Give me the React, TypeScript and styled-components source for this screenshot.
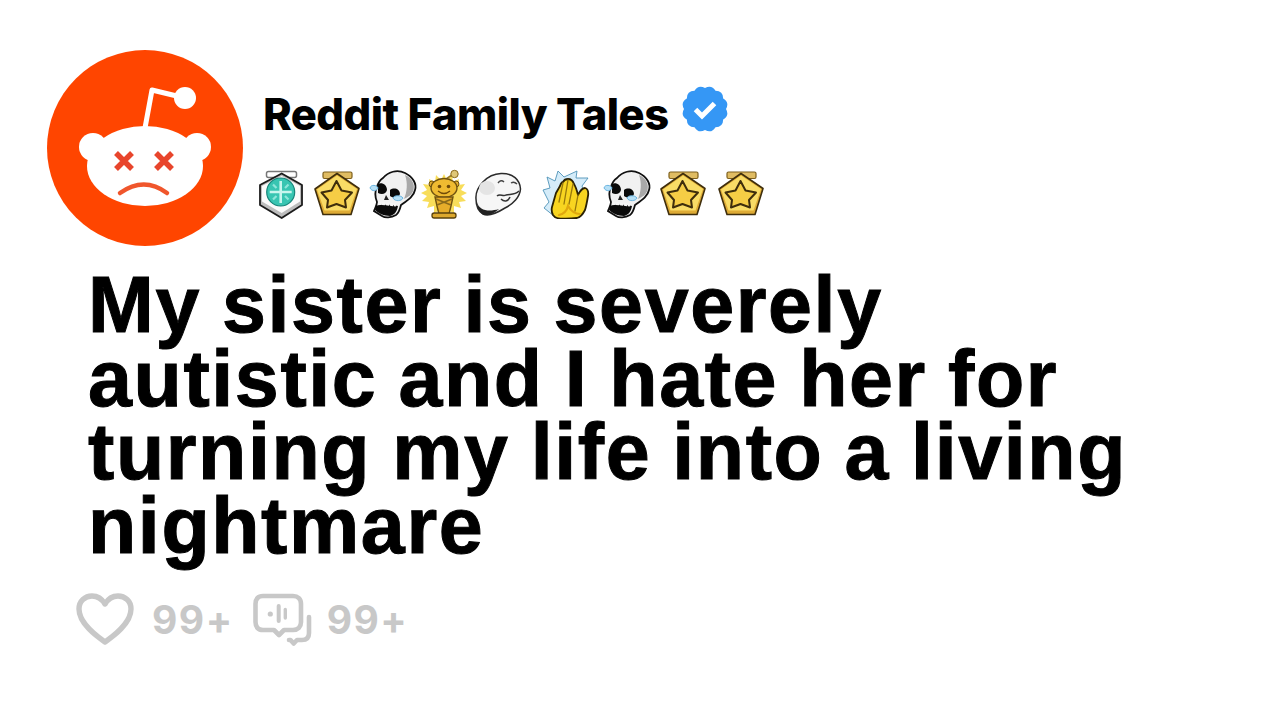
import React from "react";
import styled, { createGlobalStyle } from "styled-components";

const Global = createGlobalStyle`
  html, body { margin: 0; padding: 0; background: #fff; }
  body { width: 1280px; height: 720px; overflow: hidden; }
`;

const Page = styled.main`
  display: flex;
  flex-direction: column;
  box-sizing: border-box;
  width: 1280px;
  height: 720px;
  padding: 50px 0 0 47px;
`;
const Header = styled.header`
  display: flex;
  align-items: flex-start;
  gap: 9px;
`;
const AvatarArt = styled.svg`
  display: block;
  flex: none;
  width: 196px;
  height: 196px;
`;
const Identity = styled.div`
  display: flex;
  flex-direction: column;
  padding-top: 40px;
`;
const NameRow = styled.div`
  display: flex;
  align-items: center;
  gap: 12px;
  padding-left: 11px;
  height: 48px;
`;
const Name = styled.h2`
  margin: 0;
  font-family: Inter, "Liberation Sans", sans-serif;
  font-weight: 800;
  font-size: 43.5px;
  letter-spacing: -0.55px;
  line-height: 48px;
  color: #000;
`;
const VerifiedArt = styled.svg`
  display: block;
  flex: none;
  width: 48px;
  height: 48px;
  margin-bottom: 10px;
`;
const Badges = styled.div`
  display: flex;
  align-items: center;
  margin-top: 31px;
  padding-left: 4px;
  height: 50px;
`;
const BadgeSlot = styled.svg<{ $gap: number }>`
  display: block;
  flex: none;
  width: 50px;
  height: 50px;
  margin-left: ${(p) => p.$gap}px;
`;
const Title = styled.h1`
  margin: 22px 0 0 41px;
  width: 1070px;
  font-family: "Liberation Sans", Arial, sans-serif;
  font-weight: 700;
  font-size: 79px;
  letter-spacing: 1.6px;
  word-spacing: -2.5px;
  line-height: 73.5px;
  color: #000;
  -webkit-text-stroke: 1px #000;
`;
const Stats = styled.div`
  display: flex;
  align-items: flex-start;
  margin: 31px 0 0 29px;
  height: 54px;
`;
const StatIcon = styled.svg`
  display: block;
  flex: none;
`;
const Count = styled.span<{ $left: number; $right: number }>`
  margin-left: ${(p) => p.$left}px;
  margin-right: ${(p) => p.$right}px;
  font-family: Inter, "Liberation Sans", sans-serif;
  font-weight: 700;
  font-size: 39px;
  letter-spacing: 1.5px;
  line-height: 54px;
  color: #c8c8c8;
`;

const Avatar = () => (
  <AvatarArt viewBox="0 0 196 196">
    <circle cx="98" cy="98" r="98" fill="#ff4500" />
    <path d="M98 78 L105 40 L138 48" fill="none" stroke="#fff" strokeWidth="5" strokeLinejoin="round" />
    <circle cx="138" cy="48" r="11" fill="#fff" />
    <circle cx="46" cy="97" r="14" fill="#fff" />
    <circle cx="150" cy="97" r="14" fill="#fff" />
    <ellipse cx="98" cy="116" rx="58" ry="40" fill="#fff" />
    <path d="M69 103 L85 119 M85 103 L69 119 M109 103 L125 119 M125 103 L109 119" stroke="#e8452c" strokeWidth="5.5" />
    <path d="M73 143 Q97 126 120 143" fill="none" stroke="#f0562c" strokeWidth="4.5" strokeLinecap="round" />
  </AvatarArt>
);

const scallopPath = (() => {
  const cx = 24, cy = 24, n = 12;
  let d = "";
  for (let i = 0; i < n; i++) {
    const a = (i / n) * Math.PI * 2;
    const b = ((i + 0.5) / n) * Math.PI * 2;
    const c = ((i + 1) / n) * Math.PI * 2;
    const p = (t: number, r: number) => `${(cx + r * Math.sin(t)).toFixed(2)} ${(cy - r * Math.cos(t)).toFixed(2)}`;
    if (i === 0) d += `M${p(a, 21)} `;
    d += `Q${p(b, 25.6)} ${p(c, 21)} `;
  }
  return d + "Z";
})();

const Verified = () => (
  <VerifiedArt viewBox="0 0 48 48">
    <path d={scallopPath} fill="#3597f5" />
    <path d="M14.5 24.5 L21 31 L33.5 18.5" fill="none" stroke="#fff" strokeWidth="5" />
  </VerifiedArt>
);

const Shield = ({ gap }: { gap: number }) => (
  <BadgeSlot $gap={gap} viewBox="0 0 50 50">
    <rect x="10.5" y="2.5" width="30" height="6" rx="2" fill="#fff" stroke="#777" strokeWidth="1.5" />
    <path d="M25.7 4.5 L46 16 V36 L25.7 49 L4 36 V16 Z" fill="#bdbdbd" stroke="#1c1c1c" strokeWidth="1.8" strokeLinejoin="round" />
    <path d="M25.7 7 L44 17 V32.5 L25.7 44 L6 32.5 V17 Z" fill="#fbfbfb" />
    <circle cx="24.7" cy="23" r="14" fill="#38c5b2" stroke="#17857a" strokeWidth="1.2" />
    <path d="M24.7 12 V34 M13.7 23 H35.7" stroke="#c9f5ee" strokeWidth="2.6" />
    <path d="M17 15.5 L20.5 19 M32.5 15.5 L29 19 M17 30.5 L20.5 27 M32.5 30.5 L29 27" stroke="#8fe6da" strokeWidth="2.2" />
  </BadgeSlot>
);

const Medal = ({ gap }: { gap: number }) => (
  <BadgeSlot $gap={gap} viewBox="0 0 50 50">
    <rect x="11" y="3" width="29" height="6.5" rx="1.5" fill="#e0bc62" stroke="#7d5f1c" strokeWidth="1.2" />
    <path d="M25 4.5 L47 19.5 L39 45.5 H11 L3 20 Z" fill="#deab35" stroke="#3f2e0c" strokeWidth="1.6" strokeLinejoin="round" />
    <path d="M25 6.5 L45 20 L37.5 41.5 H12.5 L5 20.5 Z" fill="#f9dc66" strokeLinejoin="round" />
    <path d="M24.5 12 L29.5 21.5 L40 23.5 L33 31 L34 38.5 L24.5 35 L15 38.5 L16 31 L9.5 23.5 L19.5 21.5 Z" fill="#f6cd45" stroke="#3f2e0c" strokeWidth="2" strokeLinejoin="round" />
  </BadgeSlot>
);

const Skull = ({ gap }: { gap: number }) => (
  <BadgeSlot $gap={gap} viewBox="0 0 50 50">
    <path d="M15 9 C20 3 29 0 37 4 C45 8 49 15 47 21 C46 27 40 31 33 36 C32 40 31 44 28 46 C23 49 17 49 14 47 L6 42 C7 39 9 36 9 33 C7 28 7 22 9 18 C10 14 12 11 15 9 Z" fill="#f1f1f1" stroke="#111" strokeWidth="1.8" />
    <path d="M37 6 C44 9 47 15 45.500 21 C44 26 40 28 36 30 C39 23 40 14 37 6 Z" fill="#a9a9a9" />
    <path d="M10 15 C14 13 19 16 19 21 C18 25 14 26 10 24 Z M22 21 C26 18 32 20 32 25 C31 29 26 30 22 27 Z" fill="#0a0a0a" />
    <path d="M18 26 L21 31 L16 31 Z" fill="#222" />
    <path d="M8 37 C14 35 24 36 30 37 C29 43 26 46 22 47 C16 47 10 44 7 41 Z" fill="#0a0a0a" />
    <path d="M10 34 L28 36" stroke="#f5f5f5" strokeWidth="3" strokeDasharray="3.2 0.8" />
    <path d="M2 19 C3 15 9 16 10 19 C9 22 4 23 2 19 Z M25 29 C26 26 33 26 35 29 C34 32 27 33 25 29 Z" fill="#b7e0f6" stroke="#6cb5e0" strokeWidth="1" />
  </BadgeSlot>
);

const Oscar = ({ gap }: { gap: number }) => (
  <BadgeSlot $gap={gap} viewBox="0 0 50 50">
    <path d="M24 5 L27 11 L32 6 L33 13 L39 10 L38 16 L45 15 L41 21 L47 24 L41 27 L46 32 L39 33 L41 39 L34 37 L34 44 L24 40 L14 44 L14 37 L7 39 L9 33 L2 32 L7 27 L1 24 L7 21 L3 15 L10 16 L9 10 L15 13 L16 6 L21 11 Z" fill="#f8dd5a" />
    <path d="M26 10 L32 6" stroke="#9a7a20" strokeWidth="1.6" />
    <circle cx="34.5" cy="5" r="3.7" fill="#dfc777" stroke="#8a6a1a" />
    <circle cx="12" cy="15" r="3" fill="#e3ad2b" stroke="#6f5210" />
    <circle cx="36" cy="15" r="3" fill="#e3ad2b" stroke="#6f5210" />
    <ellipse cx="24" cy="19" rx="13" ry="9.5" fill="#efbb31" stroke="#6f5210" strokeWidth="1.4" />
    <circle cx="19.5" cy="17.5" r="1.8" fill="#6f4a08" />
    <circle cx="28.5" cy="17.5" r="1.8" fill="#6f4a08" />
    <path d="M18 22 Q24 27 30 22" fill="none" stroke="#6f4a08" strokeWidth="1.3" />
    <path d="M15 28 H33 L31 37 L29 45 H19 L17 37 Z" fill="#e6ad2a" stroke="#6f5210" strokeWidth="1.4" />
    <path d="M16 30 L31 36 M32 30 L17 36" stroke="#8a6a1a" strokeWidth="1.4" />
    <rect x="12" y="44" width="24" height="5" rx="2.2" fill="#dca82e" stroke="#5a420c" strokeWidth="1.3" />
  </BadgeSlot>
);

const Seal = ({ gap }: { gap: number }) => (
  <BadgeSlot $gap={gap} viewBox="0 0 50 50">
    <path d="M3 30 C2 18 14 5 28 4.5 C40 4 47 11 47.5 20 C47 28 40 35 32 39 C24 44 16 48 10 45 C5 42 3 36 3 30 Z" fill="#f6f6f6" stroke="#2a2a2a" strokeWidth="1.5" />
    <path d="M4 33 C6 42 16 43 26 40 C20 46 12 48 8 44 C5 41 4 37 4 33 Z" fill="#222" />
    <path d="M25 14 Q28 10 31 13 M38 14 Q41 12 44 15" fill="none" stroke="#444" strokeWidth="1.4" />
    <path d="M24 27 C27 24 30 28 33 26 C38 25 42 26 46 22 M28 30 C31 33 35 33 37 28" fill="none" stroke="#333" strokeWidth="1.5" />
    <ellipse cx="14" cy="19" rx="8" ry="7" fill="#e4e4e4" />
  </BadgeSlot>
);

const Clap = ({ gap }: { gap: number }) => (
  <BadgeSlot $gap={gap} viewBox="0 0 50 50">
    <path d="M7 8 L15 12 L18 2 L24 8 L37 2 L36 9 L48 9 L42 17 L44 24 L30 44 L14 47 L4 39 L9 33 L3 21 L10 19 Z" fill="#d5ecf9" stroke="#4f93b8" strokeWidth="0.9" strokeLinejoin="round" />
    <path d="M13 46 C11 42 12 38 12 38 L16 24 L20 17 C21 14 22 13 23 13 C24 11 26 10 28 10 C31 10 33 12 34 15 C36 18 37 22 38 26 C40 22 42 19 45 19 C48 20 48.5 24 48 27 C47 33 46 38 45 41 C43 45 41 48 37 49 C30 50 20 50 17 49 C15 48.500 14 47.500 13 46 Z" fill="#f8d520" stroke="#2b2205" strokeWidth="1.800" strokeLinejoin="round" />
    <path d="M23 14 L19 33 M28 11 L24 35 M33 15 L29 35 M38 26 L35 42" stroke="#97780c" strokeWidth="1.300" fill="none" strokeLinecap="round" />
    <path d="M19 46 C24 45 27 41 28 37 C31 42 34 45 40 45" stroke="#e0a80d" strokeWidth="2.200" fill="none" strokeLinecap="round" />
  </BadgeSlot>
);

const HeartIcon = () => (
  <StatIcon width="58" height="54" viewBox="0 0 58 54">
    <path d="M29 49 C22 44 3 31 3 16 C3 8 9 3 16 3 C22 3 26 6 29 11 C32 6 36 3 42 3 C49 3 55 8 55 16 C55 31 36 44 29 49 Z" fill="none" stroke="#c8c8c8" strokeWidth="5.4" strokeLinejoin="round" />
  </StatIcon>
);

const CommentIcon = () => (
  <StatIcon width="60" height="54" viewBox="0 0 60 54">
    <path d="M10 3 H40 C45 3 48 6 48 11 V29 C48 34 45 37 40 37 H31 L26 42 L21 37 H10 C5 37 2.500 34 2.500 29 V11 C2.500 6 5 3 10 3 Z" fill="none" stroke="#c8c8c8" strokeWidth="4.6" strokeLinejoin="round" />
    <path d="M25.700 13 V28" stroke="#c8c8c8" strokeWidth="4" strokeLinecap="round" />
    <path d="M32.300 16.500 V25" stroke="#c8c8c8" strokeWidth="3.4" strokeLinecap="round" />
    <circle cx="17.300" cy="21" r="2.600" fill="#c8c8c8" />
    <path d="M56 24 V40 C56 45 53 47 49 47 H44 L40.700 50.500 L37.500 47 H36" fill="none" stroke="#c8c8c8" strokeWidth="4.600" strokeLinecap="round" strokeLinejoin="round" />
  </StatIcon>
);

export default function App() {
  return (
    <>
      <Global />
      <Page>
        <Header>
          <Avatar />
          <Identity>
            <NameRow>
              <Name>Reddit Family Tales</Name>
              <Verified />
            </NameRow>
            <Badges>
              <Shield gap={0} />
              <Medal gap={5.5} />
              <Skull gap={6} />
              <Oscar gap={2} />
              <Seal gap={3.5} />
              <Clap gap={17} />
              <Skull gap={11.5} />
              <Medal gap={6} />
              <Medal gap={8.5} />
            </Badges>
          </Identity>
        </Header>
        <Title>My sister is severely autistic and I hate her for turning my life into a living nightmare</Title>
        <Stats>
          <HeartIcon />
          <Count $left={18} $right={19}>99+</Count>
          <CommentIcon />
          <Count $left={14} $right={0}>99+</Count>
        </Stats>
      </Page>
    </>
  );
}
